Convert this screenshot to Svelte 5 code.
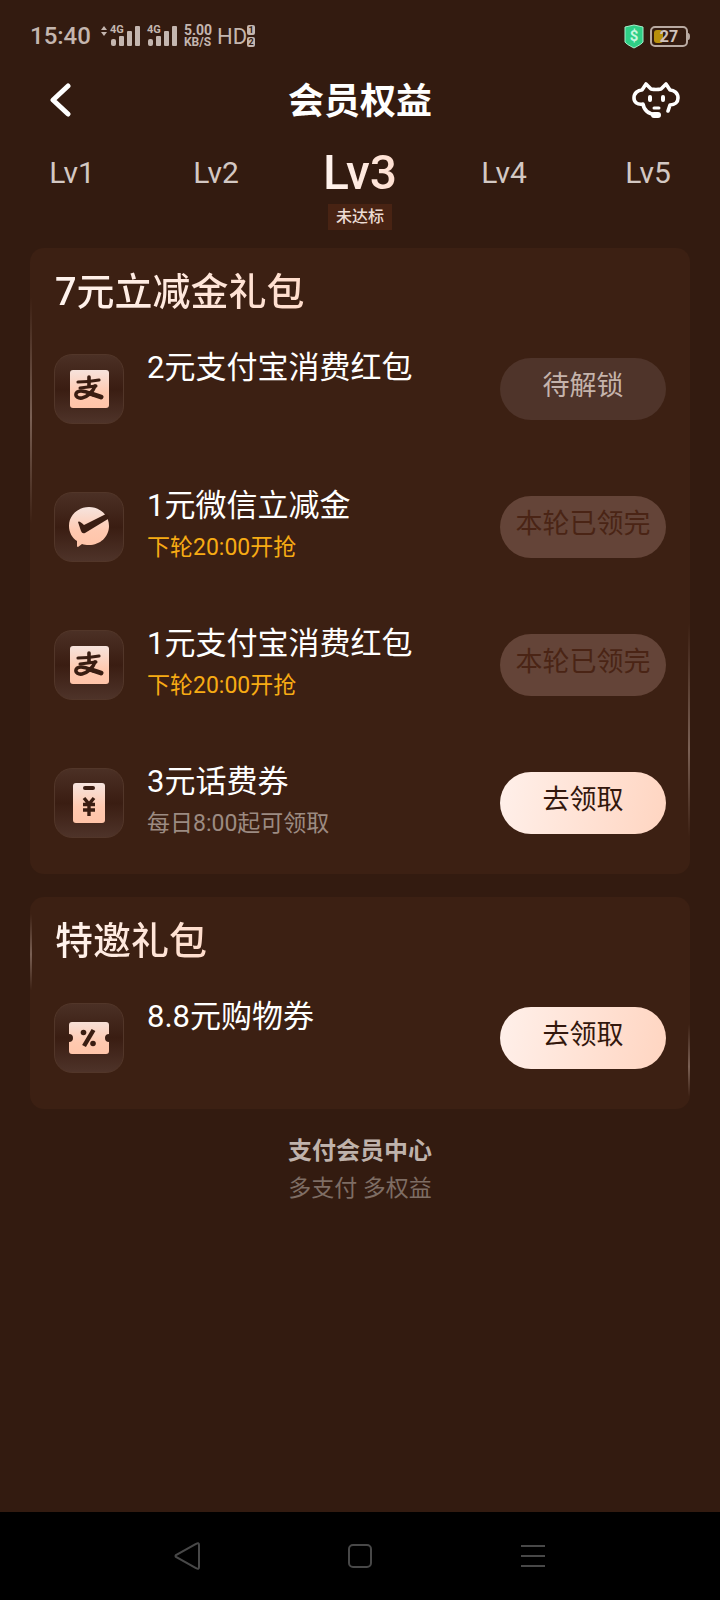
<script lang="ts">
  type Status = "locked" | "soldout" | "open";
  type Icon = "alipay" | "wechat" | "phone" | "coupon";

  interface Gift {
    icon: Icon;
    title: string;
    note?: string;
    hot?: boolean;
    status: Status;
  }

  const levels = ["Lv1", "Lv2", "Lv3", "Lv4", "Lv5"];
  let current = $state("Lv3");

  const labels: Record<Status, string> = {
    locked: "待解锁",
    soldout: "本轮已领完",
    open: "去领取",
  };

  const packs: { name: string; gifts: Gift[] }[] = [
    {
      name: "7元立减金礼包",
      gifts: [
        { icon: "alipay", title: "2元支付宝消费红包", status: "locked" },
        { icon: "wechat", title: "1元微信立减金", note: "下轮20:00开抢", hot: true, status: "soldout" },
        { icon: "alipay", title: "1元支付宝消费红包", note: "下轮20:00开抢", hot: true, status: "soldout" },
        { icon: "phone", title: "3元话费券", note: "每日8:00起可领取", status: "open" },
      ],
    },
    {
      name: "特邀礼包",
      gifts: [{ icon: "coupon", title: "8.8元购物券", status: "open" }],
    },
  ];
</script>

{#snippet signal()}
  <span class="signal">
    <span class="net">4G</span>
    <svg width="30" height="22" viewBox="0 0 30 22" fill="currentColor" aria-hidden="true">
      <rect x="1" y="14" width="5" height="7" rx="2" />
      <rect x="9" y="11" width="5" height="10" rx="1" />
      <rect x="17" y="6" width="5" height="15" rx="1" />
      <rect x="25" y="1" width="5" height="20" rx="1" />
    </svg>
  </span>
{/snippet}

{#snippet giftIcon(name: Icon)}
  <svg width="40" height="40" viewBox="0 0 40 40" aria-hidden="true">
    <defs>
      <linearGradient id="peach" x1="0" y1="0" x2="0" y2="40" gradientUnits="userSpaceOnUse">
        <stop offset="0" stop-color="#f6e4de" />
        <stop offset="0.6" stop-color="#ffc9b0" />
        <stop offset="1" stop-color="#ffc4a8" />
      </linearGradient>
    </defs>
    {#if name === "alipay"}
      <rect x="1" y="1" width="39" height="38" rx="3" fill="url(#peach)" />
      <g fill="none" stroke="#3a1d12" stroke-linecap="round">
        <path d="M9 13Q19 13 30 11" stroke-width="3.2" />
        <path d="M20 8V17" stroke-width="3.6" />
        <path d="M11 19Q19 18 27 17" stroke-width="3" />
        <path d="M26 17C24 23 18 28 13 29C5 30 5 22 12 22C18 22 22 25 25 26" stroke-width="3.6" />
        <path d="M23 25L32 28" stroke-width="5" />
      </g>
    {:else if name === "wechat"}
      <path
        d="M20 0C31 0 40 8 40 19S31 38 20 38C17 38 15 37.600 13 37L9 40Q8 40 8 39V34C3 31 0 25 0 19C0 8 9 0 20 0Z"
        fill="url(#peach)"
      />
      <path d="M9 15Q10 13 15 18L37 7L40 9L39 12L16 26Q13 27 12 24Z" fill="#3a1d12" />
    {:else if name === "phone"}
      <rect x="4" y="0" width="32" height="40" rx="3" fill="url(#peach)" />
      <rect x="14" y="3" width="12" height="4" rx="2" fill="#3a1d12" />
      <g fill="none" stroke="#3a1d12" stroke-width="3.4">
        <path d="M15 15L20 21L25 15M20 20V33M14 21.500H26M14 27H26" />
      </g>
    {:else}
      <path
        d="M3 4H37Q40 4 40 7V16A4 4 0 0 0 40 24V33Q40 36 37 36H3Q0 36 0 33V24A4 4 0 0 0 0 16V7Q0 4 3 4Z"
        fill="url(#peach)"
      />
      <path d="M24.500 12L15 28" stroke="#3a1d12" stroke-width="4.400" />
      <circle cx="14.500" cy="14.500" r="2.800" fill="#3a1d12" />
      <circle cx="24" cy="25.500" r="2.800" fill="#3a1d12" />
    {/if}
  </svg>
{/snippet}

<div class="screen">
  <div class="status-bar">
    <span class="clock">15:40</span>
    <svg class="traffic" width="6" height="10" viewBox="0 0 6 10" fill="currentColor" aria-hidden="true">
      <path d="M3 0L6 4H0ZM3 10L6 6H0Z" />
    </svg>
    {@render signal()}
    {@render signal()}
    <span class="speed"><span>5.00</span><span>KB/S</span></span>
    <span class="hd">HD</span>
    <span class="sims"><span>1</span><span>2</span></span>
    <svg class="shield" width="20" height="25" viewBox="0 0 20 25" aria-hidden="true">
      <path d="M10 1L19 3V18Q18 20 10 24Q2 20 1 18V3Z" fill="#2fcf86" stroke="#a5efcb" />
      <text x="10" y="17" text-anchor="middle" font-size="15" font-weight="700" fill="#c9f7e0">$</text>
    </svg>
    <svg class="battery" width="40" height="21" viewBox="0 0 40 21" aria-hidden="true">
      <rect x="1" y="1" width="36" height="19" rx="4" fill="none" stroke="#b9aaa2" stroke-width="2" />
      <path d="M38 7Q40 7 40 10.500T38 14Z" fill="#b9aaa2" />
      <rect x="4" y="4" width="9" height="13" rx="3" fill="#b8900c" />
      <text x="19" y="16" text-anchor="middle" font-size="16" font-weight="700" fill="#cfc3bd">27</text>
    </svg>
  </div>

  <header>
    <button class="icon-button back" aria-label="返回">
      <svg width="22" height="34" viewBox="0 0 22 34" fill="none" stroke="#fff" stroke-width="5" stroke-linecap="round" stroke-linejoin="round">
        <path d="M19 3L4 17L19 31" />
      </svg>
    </button>
    <h1>会员权益</h1>
    <button class="icon-button" aria-label="客服">
      <svg width="48" height="37" viewBox="0 0 48 37" fill="none" stroke="#fff" stroke-width="3.6" stroke-linecap="round" stroke-linejoin="round">
        <path d="M24 33C17 32 12 29 11 22C5 23 2 20 2 16C2 11 6 8 10 8L14 2L19 7Q24 8 29 7L34 2L38 8C42 8 46 11 46 16C46 20 43 23 38 23L36 29" />
        <path d="M18 15V18M31 15V18" stroke-width="4" />
        <path d="M22 26H27" stroke-width="3" />
        <rect x="20" y="31" width="8" height="4" rx="2" fill="#fff" stroke-width="2" />
      </svg>
    </button>
  </header>

  <nav class="levels">
    {#each levels as level}
      <button class="level" class:active={level === current} onclick={() => (current = level)}>
        <span class="level-name">{level}</span>
        {#if level === current}
          <span class="level-tag">未达标</span>
        {/if}
      </button>
    {/each}
  </nav>

  <main>
    {#each packs as pack}
      <section class="card">
        <h2>{pack.name}</h2>
        <ul>
          {#each pack.gifts as gift}
            <li>
              <span class="gift-icon">{@render giftIcon(gift.icon)}</span>
              <div class="gift-text">
                <h3>{gift.title}</h3>
                {#if gift.note}
                  <p class:hot={gift.hot}>{gift.note}</p>
                {/if}
              </div>
              <button class="claim {gift.status}" disabled={gift.status !== "open"}>
                {labels[gift.status]}
              </button>
            </li>
          {/each}
        </ul>
      </section>
    {/each}
  </main>

  <footer>
    <strong>支付会员中心</strong>
    <span>多支付 多权益</span>
  </footer>

  <div class="system-nav">
    <button aria-label="后退">
      <svg width="26" height="28" viewBox="0 0 26 28"><path d="M22 2Q25 0 25 3V25Q25 28 22 26L2 15Q1 14 2 13Z" /></svg>
    </button>
    <button aria-label="主页">
      <svg width="26" height="26" viewBox="0 0 26 26"><rect x="2" y="2" width="22" height="22" rx="4" /></svg>
    </button>
    <button aria-label="最近任务">
      <svg width="24" height="24" viewBox="0 0 24 24"><path d="M0 2H24M0 12H24M0 22H24" /></svg>
    </button>
  </div>
</div>

<style>
  :global(body) {
    margin: 0;
    background: #331b10;
  }

  .screen {
    display: flex;
    flex-direction: column;
    min-height: 100vh;
    color: #fff;
    font-family: Roboto, "Noto Sans CJK SC", sans-serif;
  }

  button {
    padding: 0;
    border: none;
    background: none;
    color: inherit;
    font-family: inherit;
    cursor: pointer;
  }

  svg {
    display: block;
    flex-shrink: 0;
  }

  h1,
  h2,
  h3,
  p,
  ul {
    margin: 0;
    padding: 0;
  }

  .status-bar {
    display: flex;
    align-items: center;
    height: 72px;
    padding: 0 30px;
    color: #c4b6af;
  }

  .clock {
    font-size: 24px;
    font-weight: 500;
  }

  .traffic {
    align-self: flex-start;
    margin: 26px 3px 0 10px;
  }

  .signal {
    position: relative;
    margin-right: 7px;
  }

  .net {
    position: absolute;
    top: -1px;
    left: 0;
    font-size: 11px;
    line-height: 12px;
    font-weight: 700;
  }

  .speed {
    display: flex;
    flex-direction: column;
    font-size: 12px;
    line-height: 12px;
    font-weight: 700;
  }

  .speed span:first-child {
    font-size: 14px;
  }

  .hd {
    margin-left: 5px;
    font-size: 22px;
  }

  .sims {
    display: flex;
    flex-direction: column;
    gap: 2px;
  }

  .sims span {
    width: 8px;
    height: 10px;
    border-radius: 2px;
    background: #c4b6af;
    color: #331b10;
    font-size: 9px;
    line-height: 10px;
    font-weight: 700;
    text-align: center;
  }

  .shield {
    margin-left: auto;
  }

  .battery {
    margin-left: 6px;
  }

  header {
    display: flex;
    align-items: center;
    justify-content: space-between;
    height: 56px;
    padding: 0 40px;
  }

  .icon-button {
    display: flex;
    box-sizing: border-box;
    width: 48px;
  }

  .back {
    padding-left: 9px;
  }

  h1 {
    padding-top: 3px;
    font-size: 36px;
    line-height: 48px;
    font-weight: 700;
  }

  .levels {
    display: grid;
    grid-template-columns: repeat(5, 1fr);
    height: 120px;
  }

  .level {
    display: flex;
    flex-direction: column;
    align-items: center;
    justify-content: flex-start;
    padding-top: 20px;
    color: #d3c8c3;
  }

  .level-name {
    font-size: 30px;
    line-height: 50px;
  }

  .active .level-name {
    font-size: 48px;
    font-weight: 500;
    background: linear-gradient(90deg, #fff4ef, #ffdfd0);
    background-clip: text;
    color: transparent;
  }

  .level-tag {
    margin-top: 6px;
    padding: 0 8px;
    background: #482313;
    color: #ecdcd4;
    font-size: 16px;
    line-height: 26px;
    font-weight: 500;
  }

  main {
    display: flex;
    flex-direction: column;
    gap: 23px;
    padding: 0 30px;
  }

  /* the two thin gradients are the glints on the left and right edges */
  .card {
    padding: 20px 24px 29px;
    border-radius: 14px;
    background:
      linear-gradient(transparent 8%, #7a6054 27%, transparent 44%) left / 2px 100% no-repeat,
      linear-gradient(transparent 60%, #7a6054 80%, transparent 94%) right / 2px 100% no-repeat,
      #3c2013;
  }

  h2 {
    width: fit-content;
    margin-bottom: 31px;
    padding-left: 1px;
    background: linear-gradient(90deg, #fff4ef, #ffdccb);
    background-clip: text;
    color: transparent;
    font-size: 38px;
    line-height: 48px;
    font-weight: 500;
  }

  ul {
    display: flex;
    flex-direction: column;
    gap: 54px;
    list-style: none;
  }

  li {
    display: flex;
    align-items: center;
  }

  .gift-icon {
    display: flex;
    align-items: center;
    justify-content: center;
    flex-shrink: 0;
    box-sizing: border-box;
    width: 70px;
    height: 70px;
    border: 1px solid #523629;
    border-radius: 18px;
    background: linear-gradient(#4b3025, #3a1d12 50%, #4e3329);
  }

  .gift-text {
    flex: 1;
    min-height: 84px;
    padding-left: 23px;
  }

  h3 {
    font-size: 31px;
    line-height: 42px;
    font-weight: 400;
  }

  p {
    color: #9c8b82;
    font-size: 23px;
    line-height: 42px;
  }

  .hot {
    color: #f7ab14;
  }

  .claim {
    flex-shrink: 0;
    width: 166px;
    height: 62px;
    padding-bottom: 6px;
    border-radius: 31px;
    font-size: 27px;
    line-height: 40px;
  }

  .locked {
    background: #4f342a;
    color: #c5b3ab;
  }

  .soldout {
    background: #644438;
    color: #4a2415;
  }

  .open {
    background: linear-gradient(100deg, #fff0ea, #ffd5c1);
    color: #33170c;
  }

  footer {
    display: flex;
    flex-direction: column;
    align-items: center;
    padding: 24px 0;
    line-height: 37px;
  }

  footer strong {
    color: #bfb2ab;
    font-size: 24px;
    font-weight: 700;
  }

  footer span {
    color: #7e6d64;
    font-size: 23px;
  }

  .system-nav {
    display: grid;
    grid-template-columns: repeat(3, 24%);
    justify-content: center;
    height: 88px;
    margin-top: auto;
    background: #000;
  }

  .system-nav button {
    display: flex;
    align-items: center;
    justify-content: center;
  }

  .system-nav svg {
    fill: none;
    stroke: #484848;
    stroke-width: 2;
  }
</style>
